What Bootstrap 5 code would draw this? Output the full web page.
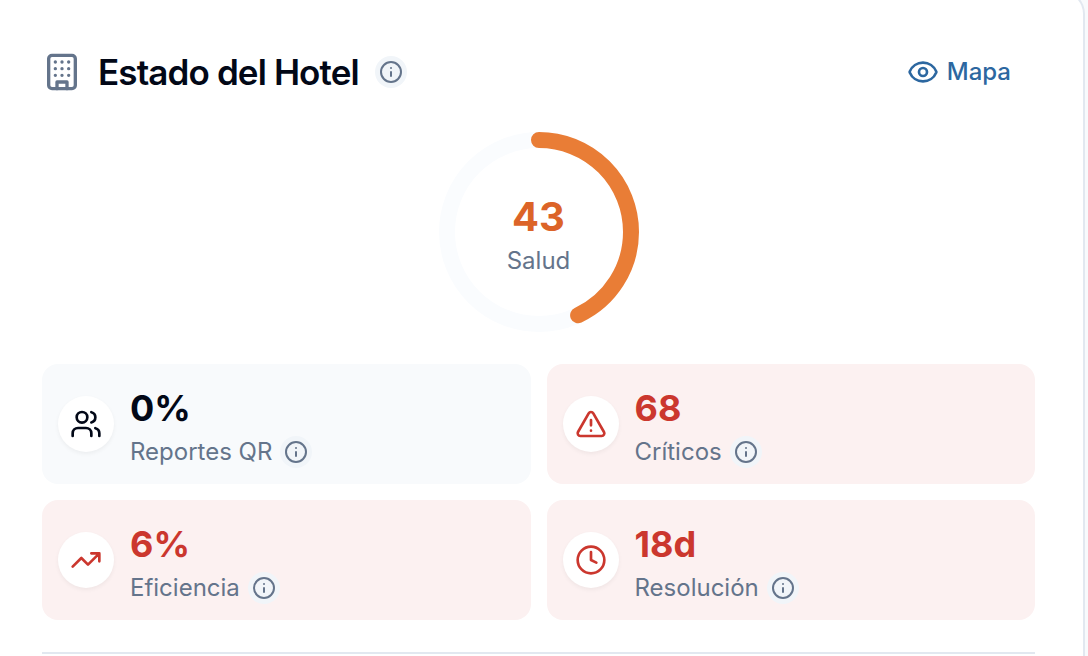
<!DOCTYPE html>
<html lang="es">
<head>
<meta charset="utf-8">
<meta name="viewport" content="width=device-width, initial-scale=1">
<title>Estado del Hotel</title>
<link rel="stylesheet" href="https://cdn.jsdelivr.net/npm/bootstrap@5.3.0/dist/css/bootstrap.min.css">
<style>
  body { font-family: Inter, "Liberation Sans", sans-serif; background: #f8fafc; color: #020817; font-size: 24px; line-height: 32px; }
  svg { display: block; flex: none; fill: none; stroke: currentColor; stroke-width: 2; stroke-linecap: round; stroke-linejoin: round; }
  .status-card { margin: -10px 3px 0 -8px; border: 2px solid #e2e8f0; border-bottom: 0; border-radius: 24px 24px 0 0; padding: 56px 48px 0; min-height: calc(100vh + 10px); }
  .status-title { font-size: 35px; line-height: 48px; font-weight: 600; letter-spacing: -0.025em; }
  .slate { color: #64748b; }
  .info-btn { width: 32px; height: 32px; padding: 4px; border: 0; border-radius: 50%; background: #f1f5f9; color: #64748b; }
  .map-link { color: #2c67a0; font-weight: 500; padding: 8px 24px; }
  .gauge { width: 200px; height: 200px; margin: 36px auto 32px; }
  .gauge-label { padding-top: 6px; }
  .gauge-value { font-size: 40px; line-height: 48px; font-weight: 700; color: #dc6428; }
  .tile { background: #f8fafc; border-radius: 16px; padding: 16px; }
  .tile-alert { background: #fcf1f1; }
  .tile-alert .tile-value, .tile-alert .tile-icon { color: #cb372e; }
  .tile-icon { width: 56px; height: 56px; flex: none; box-shadow: 0 2px 4px rgba(0, 0, 0, .05); }
  .tile-value { font-size: 36px; line-height: 56px; font-weight: 700; }
  .divider { height: 2px; margin: 32px 0 0; border: 0; background: #e2e8f0; opacity: 1; }
</style>
</head>
<body>
<svg width="0" height="0" class="position-absolute" aria-hidden="true">
  <symbol id="info" viewBox="0 0 24 24"><circle cx="12" cy="12" r="10"/><path d="M12 16v-4M12 8h.01"/></symbol>
</svg>
<main class="status-card bg-white">
  <header class="d-flex justify-content-between align-items-center">
    <div class="d-flex align-items-center gap-3">
      <svg class="slate" width="40" height="40" viewBox="0 0 24 24" aria-hidden="true"><rect x="4" y="2" width="16" height="20" rx="2"/><path d="M9 22v-4h6v4M8 6h.01M16 6h.01M12 6h.01M12 10h.01M12 14h.01M16 10h.01M16 14h.01M8 10h.01M8 14h.01"/></svg>
      <h1 class="status-title mb-0">Estado del Hotel</h1>
      <button type="button" class="info-btn" aria-label="Información del estado"><svg width="24" height="24"><use href="#info"/></svg></button>
    </div>
    <a href="#mapa" class="map-link d-flex align-items-center gap-2 text-decoration-none">
      <svg width="32" height="32" viewBox="0 0 24 24" aria-hidden="true"><path d="M2.062 12.348a1 1 0 0 1 0-.696 10.75 10.75 0 0 1 19.876 0 1 1 0 0 1 0 .696 10.75 10.75 0 0 1-19.876 0"/><circle cx="12" cy="12" r="3"/></svg>
      Mapa
    </a>
  </header>

  <section class="gauge position-relative" aria-label="Salud">
    <svg width="200" height="200" viewBox="0 0 200 200" aria-hidden="true">
      <g transform="rotate(-90 100 100)" stroke-width="16">
        <circle cx="100" cy="100" r="92" stroke="#fafcfe"/>
        <circle cx="100" cy="100" r="92" stroke="#e97d36" pathLength="100" stroke-dasharray="43 100"/>
      </g>
    </svg>
    <div class="gauge-label position-absolute top-0 start-0 w-100 h-100 d-flex flex-column align-items-center justify-content-center">
      <div class="gauge-value">43</div>
      <div class="slate pt-1">Salud</div>
    </div>
  </section>

  <section class="row row-cols-2 g-3">
    <div class="col"><div class="tile d-flex align-items-center gap-3">
      <div class="tile-icon bg-white rounded-circle d-flex align-items-center justify-content-center"><svg width="32" height="32" viewBox="0 0 24 24" aria-hidden="true"><path d="M16 21v-2a4 4 0 0 0-4-4H6a4 4 0 0 0-4 4v2"/><circle cx="9" cy="7" r="4"/><path d="M22 21v-2a4 4 0 0 0-3-3.870M16 3.130a4 4 0 0 1 0 7.750"/></svg></div>
      <div><div class="tile-value">0%</div>
        <div class="d-flex align-items-center gap-2 slate">Reportes QR <button type="button" class="info-btn" aria-label="Información de reportes QR"><svg width="24" height="24"><use href="#info"/></svg></button></div></div>
    </div></div>
    <div class="col"><div class="tile tile-alert d-flex align-items-center gap-3">
      <div class="tile-icon bg-white rounded-circle d-flex align-items-center justify-content-center"><svg width="32" height="32" viewBox="0 0 24 24" aria-hidden="true"><path d="m21.730 18-8-14a2 2 0 0 0-3.480 0l-8 14A2 2 0 0 0 4 21h16a2 2 0 0 0 1.730-3M12 9v4M12 17h.01"/></svg></div>
      <div><div class="tile-value">68</div>
        <div class="d-flex align-items-center gap-2 slate">Críticos <button type="button" class="info-btn" aria-label="Información de críticos"><svg width="24" height="24"><use href="#info"/></svg></button></div></div>
    </div></div>
    <div class="col"><div class="tile tile-alert d-flex align-items-center gap-3">
      <div class="tile-icon bg-white rounded-circle d-flex align-items-center justify-content-center"><svg width="32" height="32" viewBox="0 0 24 24" aria-hidden="true"><path d="m22 7-8.500 8.500-5-5L2 17M16 7h6v6"/></svg></div>
      <div><div class="tile-value">6%</div>
        <div class="d-flex align-items-center gap-2 slate">Eficiencia <button type="button" class="info-btn" aria-label="Información de eficiencia"><svg width="24" height="24"><use href="#info"/></svg></button></div></div>
    </div></div>
    <div class="col"><div class="tile tile-alert d-flex align-items-center gap-3">
      <div class="tile-icon bg-white rounded-circle d-flex align-items-center justify-content-center"><svg width="32" height="32" viewBox="0 0 24 24" aria-hidden="true"><circle cx="12" cy="12" r="10"/><path d="M12 6v6l4 2"/></svg></div>
      <div><div class="tile-value">18d</div>
        <div class="d-flex align-items-center gap-2 slate">Resolución <button type="button" class="info-btn" aria-label="Información de resolución"><svg width="24" height="24"><use href="#info"/></svg></button></div></div>
    </div></div>
  </section>
  <hr class="divider">
</main>
<script src="https://cdn.jsdelivr.net/npm/bootstrap@5.3.0/dist/js/bootstrap.bundle.min.js"></script>
</body>
</html>
